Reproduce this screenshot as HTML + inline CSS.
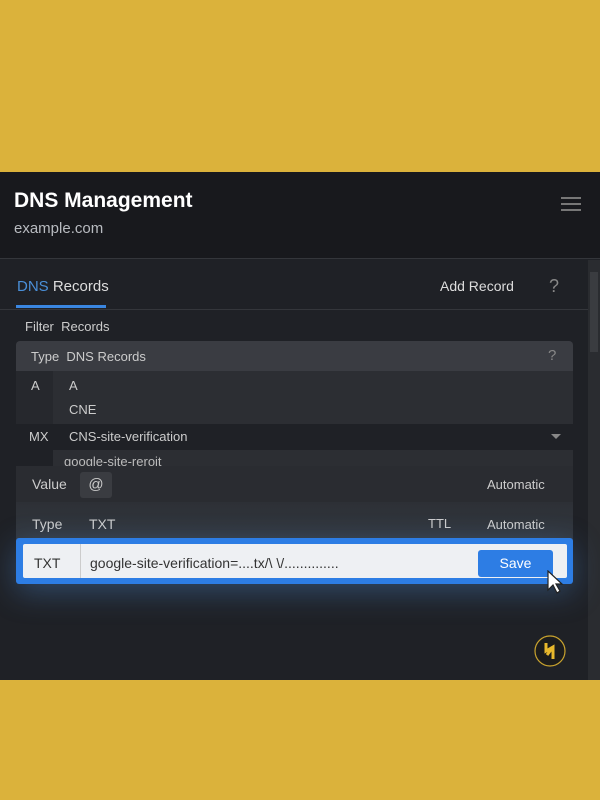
<!DOCTYPE html>
<html><head><style>
*{margin:0;padding:0;box-sizing:border-box}
body{width:600px;height:800px;background:#dbb23b;position:relative;overflow:hidden;font-family:"Liberation Sans",sans-serif}
.p{position:absolute;left:0;top:172px;width:600px;height:508px;background:#1f2126;overflow:hidden}
.hd{position:absolute;left:0;top:0;width:600px;height:87px;background:#18191d;border-bottom:1px solid #34363b}
.a{position:absolute;white-space:nowrap}
</style></head><body>
<div class="p">
<div class="hd">
 <div class="a" style="left:14px;top:17px;color:#fff;font-size:21px;font-weight:bold">DNS Management</div>
 <div class="a" style="left:14px;top:48px;color:#b8bbc0;font-size:15px">example.com</div>
 <div class="a" style="left:561px;top:25px;width:20px;height:2px;background:#777;box-shadow:0 6px 0 #777,0 12px 0 #777"></div>
</div>
<div class="a" style="left:588px;top:88px;width:12px;height:420px;background:#2a2c30"></div>
<div class="a" style="left:590px;top:100px;width:8px;height:80px;background:#3a3c40"></div>
<div class="a" style="left:17px;top:106px;font-size:15px;color:#ddd"><span style="color:#4a8fd8">DNS</span> Records</div>
<div class="a" style="left:16px;top:133px;width:90px;height:3px;background:#3a86e0"></div>
<div class="a" style="left:0;top:137px;width:588px;height:1px;background:#34363b"></div>
<div class="a" style="left:440px;top:106px;font-size:14px;color:#ddd">Add Record</div>
<div class="a" style="left:549px;top:104px;font-size:18px;color:#888">?</div>
<div class="a" style="left:25px;top:147px;font-size:13px;color:#ccc">Filter&nbsp; Records</div>
<div class="a" style="left:16px;top:169px;width:557px;height:30px;background:#3a3c42;border-radius:4px 4px 0 0"></div>
<div class="a" style="left:31px;top:177px;font-size:13px;color:#ccc">Type&nbsp; DNS Records</div>
<div class="a" style="left:548px;top:175px;font-size:15px;color:#888">?</div>
<div class="a" style="left:16px;top:199px;width:557px;height:53px;background:#26282d"></div>
<div class="a" style="left:53px;top:199px;width:520px;height:53px;background:#2c2e33"></div>
<div class="a" style="left:31px;top:206px;font-size:13px;color:#ccc">A</div>
<div class="a" style="left:69px;top:206px;font-size:13px;color:#ccc">A</div>
<div class="a" style="left:69px;top:230px;font-size:13px;color:#ccc">CNE</div>
<div class="a" style="left:29px;top:257px;font-size:13px;color:#ccc">MX</div>
<div class="a" style="left:69px;top:257px;font-size:13px;color:#ccc">CNS-site-verification</div>
<div class="a" style="left:551px;top:262px;border:5px solid transparent;border-top:5px solid #888"></div>
<div class="a" style="left:53px;top:278px;width:520px;height:18px;background:#2c2e33"></div>
<div class="a" style="left:64px;top:282px;font-size:13px;color:#bbb">google-site-reroit</div>
<div class="a" style="left:16px;top:294px;width:557px;height:36px;background:#2a2c31"></div>
<div class="a" style="left:32px;top:304px;font-size:14px;color:#ccc">Value</div>
<div class="a" style="left:80px;top:300px;width:32px;height:26px;background:#3a3c41;border-radius:3px;color:#ccc;font-size:15px;text-align:center;line-height:25px">@</div>
<div class="a" style="left:487px;top:305px;font-size:13px;color:#ccc">Automatic</div>
<div class="a" style="left:16px;top:330px;width:557px;height:40px;background:linear-gradient(#2d3036,#33383f)"></div>
<div class="a" style="left:32px;top:344px;font-size:14px;color:#ccc">Type</div>
<div class="a" style="left:89px;top:344px;font-size:14px;color:#ccc">TXT</div>
<div class="a" style="left:428px;top:344px;font-size:13px;color:#ccc">TTL</div>
<div class="a" style="left:487px;top:345px;font-size:13px;color:#ccc">Automatic</div>
<div class="a" style="left:16px;top:366px;width:557px;height:46px;background:#2d7de4;border-radius:3px;box-shadow:0 8px 30px rgba(80,150,230,.35)"></div>
<div class="a" style="left:23px;top:372px;width:544px;height:34px;background:#eef0f3;border-radius:2px"></div>
<div class="a" style="left:80px;top:372px;width:1px;height:34px;background:#ccc"></div>
<div class="a" style="left:34px;top:383px;font-size:14px;color:#333">TXT</div>
<div class="a" style="left:90px;top:383px;font-size:14px;color:#333">google-site-verification=....tx/\ \/..............</div>
<div class="a" style="left:478px;top:378px;width:75px;height:27px;background:#2d7de4;border-radius:3px;color:#fff;font-size:14px;text-align:center;line-height:27px">Save</div>
<svg class="a" style="left:546px;top:398px" width="18" height="26" viewBox="0 0 18 26"><path d="M2 1 L2 20 L7 15 L11 23 L14 21 L10 14 L16 14 Z" fill="#fff" stroke="#222" stroke-width="1.2"/></svg>
<svg class="a" style="left:533px;top:462px" width="34" height="34" viewBox="0 0 34 34"><circle cx="17" cy="17" r="15" fill="#1c1c1c" stroke="#c9a32e" stroke-width="1.2"/><path d="M13 9 L13 17 L20 13 L20 25 M20 13 L14 21" stroke="#e8b82c" stroke-width="3" fill="none"/></svg>
</div>
</body></html>
